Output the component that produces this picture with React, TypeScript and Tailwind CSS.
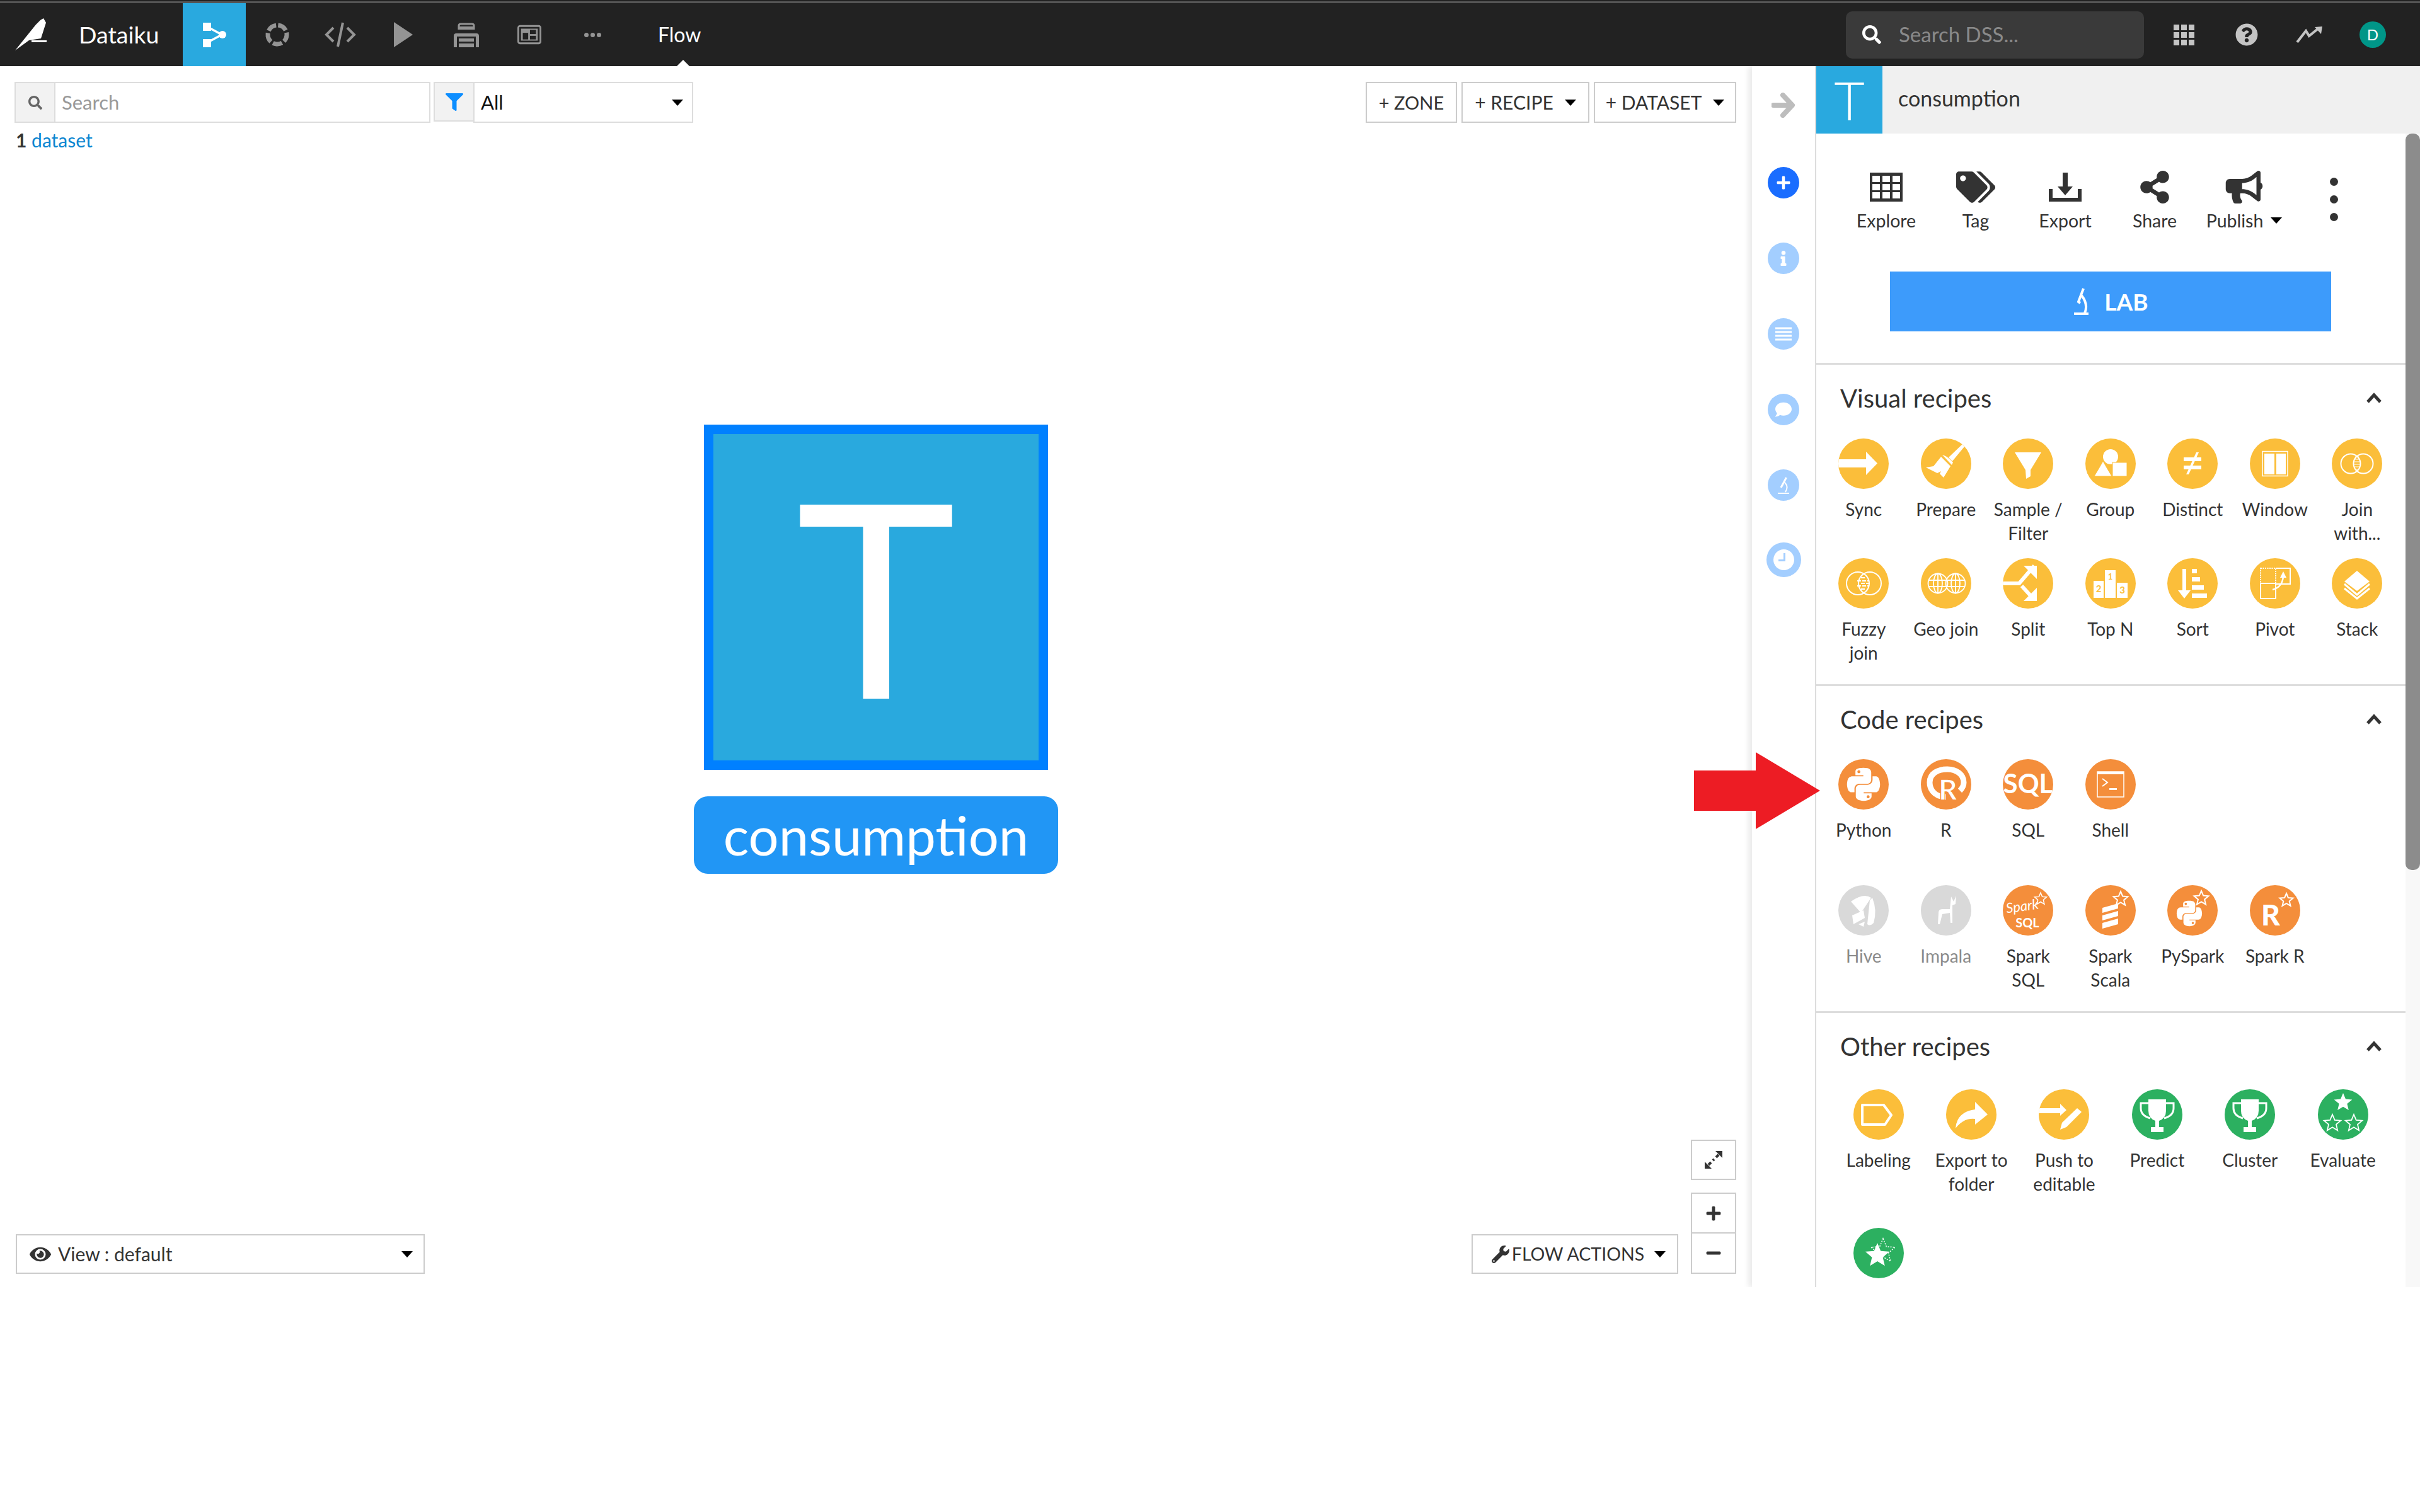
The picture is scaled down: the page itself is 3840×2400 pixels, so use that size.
import React from "react";
import { FaPython, FaTags, FaShareAlt, FaBullhorn, FaEye, FaWrench, FaPlus, FaMinus, FaInfo, FaComment, FaQuestionCircle, FaFilter, FaSearch } from "react-icons/fa";

const Caret = ({ className = "" }: { className?: string }) => (
  <span className={"inline-block w-0 h-0 border-x-[9px] border-x-transparent border-t-[10px] border-t-black " + className} />
);

const Star = ({ cx, cy, r, fill = "#fff", sw = 0, dash }: { cx: number; cy: number; r: number; fill?: string; sw?: number; dash?: string }) => {
  const pts: string[] = [];
  for (let i = 0; i < 10; i++) {
    const a = -Math.PI / 2 + (i * Math.PI) / 5;
    const rr = i % 2 === 0 ? r : r * 0.45;
    pts.push(`${(cx + rr * Math.cos(a)).toFixed(1)},${(cy + rr * Math.sin(a)).toFixed(1)}`);
  }
  return <polygon points={pts.join(" ")} fill={fill} stroke={sw ? "#fff" : "none"} strokeWidth={sw} strokeDasharray={dash} />;
};

const S = ({ children }: { children: React.ReactNode }) => (
  <svg viewBox="0 0 80 80" className="w-full h-full block">{children}</svg>
);

const Trophy = () => (
  <S>
    <path d="M26 16 H54 V34 Q54 46 43 50 V60 H50 V68 H30 V60 H37 V50 Q26 46 26 34 Z" fill="#fff" />
    <path d="M27 22 H14 V30 Q14 42 29 46 M53 22 H66 V30 Q66 42 51 46" stroke="#fff" strokeWidth="3" fill="none" />
  </S>
);

const recipeIcons: Record<string, React.ReactNode> = {
  sync: <S><polygon points="0,33 44,33 44,21 62,39.500 44,58 44,46 0,46" fill="#fff" /></S>,
  prepare: (
    <S>
      <path d="M44 30 L66 9 L69 13 L50 36 Z" fill="#fff" />
      <path d="M37 27 Q44 30 51 38 L49 42 L34 26 Z" fill="#fff" />
      <path d="M32 29 L47 44 L36 62 L30 56 L32 52 L26 55 L8 46 L20 44 Z" fill="#fff" />
    </S>
  ),
  sample: <S><polygon points="19,22 61,22 44,50 44,60 37,64 36,50" fill="#fff" /></S>,
  group: (
    <S>
      <circle cx="40" cy="29" r="12" fill="#fff" />
      <polygon points="28,36 42,60 14,60" fill="#fff" stroke="#fbbe3a" strokeWidth="1" />
      <rect x="43" y="38" width="23" height="22" fill="#fff" stroke="#fbbe3a" strokeWidth="1" />
    </S>
  ),
  distinct: (
    <S>
      <rect x="26" y="30" width="28" height="6" fill="#fff" />
      <rect x="26" y="43" width="28" height="6" fill="#fff" />
      <polygon points="46,22 50,22 34,57 30,57" fill="#fff" />
    </S>
  ),
  window: (
    <S>
      <rect x="20" y="20.500" width="40" height="39" fill="none" stroke="#fff" strokeWidth="1.500" />
      <rect x="23" y="24" width="16" height="33" fill="#fff" />
      <rect x="42" y="24" width="15" height="33" fill="#fff" />
    </S>
  ),
  join: (
    <S>
      <circle cx="30" cy="40" r="15.500" fill="none" stroke="#fff" strokeWidth="2" />
      <circle cx="50" cy="40" r="15.500" fill="none" stroke="#fff" strokeWidth="2" />
      <path d="M37 29 H43 M35 33 H45 M35 37 H45 M35 41 H45 M35 45 H45 M37 49 H43" stroke="#fff" strokeWidth="1" />
    </S>
  ),
  fuzzy: (
    <S>
      <circle cx="31" cy="40" r="18" fill="none" stroke="#fff" strokeWidth="2" />
      <circle cx="50" cy="40" r="18" fill="none" stroke="#fff" strokeWidth="2" />
      <path d="M36 31 H44 M30 36 H48 M36 40 H50 M30 44 H48 M36 49 H44" stroke="#fff" strokeWidth="2" strokeDasharray="6 2" />
    </S>
  ),
  geo: (
    <S>
      {[27, 55].map((x) => (
        <g key={x} fill="none" stroke="#fff" strokeWidth="1.800">
          <circle cx={x} cy="40" r="15.500" />
          <ellipse cx={x} cy="40" rx="7" ry="15.500" />
          <path d={`M${x} 24.500 V55.500 M${x - 15} 35 H${x + 15} M${x - 15} 45 H${x + 15}`} />
        </g>
      ))}
    </S>
  ),
  split: (
    <S>
      <path d="M0 40 H26 L50 12" fill="none" stroke="#fff" strokeWidth="6" />
      <path d="M30 44 L50 66" fill="none" stroke="#fff" strokeWidth="6" />
      <polygon points="33,12 54,12 54,33" fill="#fff" />
      <polygon points="54,47 54,68 33,68" fill="#fff" />
    </S>
  ),
  topn: (
    <S>
      <rect x="31" y="19" width="17" height="44" fill="#fff" />
      <rect x="13" y="36" width="16" height="27" fill="#fff" />
      <rect x="50" y="39" width="17" height="24" fill="#fff" />
      <text x="39.500" y="34" textAnchor="middle" fontSize="13" fontWeight="700" fill="#fbbe3a" fontFamily="Lato">1</text>
      <text x="21" y="54" textAnchor="middle" fontSize="15" fontWeight="700" fill="#fbbe3a" fontFamily="Lato">2</text>
      <text x="58.500" y="56" textAnchor="middle" fontSize="15" fontWeight="700" fill="#fbbe3a" fontFamily="Lato">3</text>
    </S>
  ),
  sort: (
    <S>
      <rect x="24" y="17" width="6" height="36" fill="#fff" />
      <polygon points="17,51 37,51 27,64" fill="#fff" />
      <rect x="39" y="17" width="8" height="7" fill="#fff" />
      <rect x="39" y="30" width="13" height="7" fill="#fff" />
      <rect x="39" y="43" width="19" height="7" fill="#fff" />
      <rect x="39" y="56" width="24" height="7" fill="#fff" />
    </S>
  ),
  pivot: (
    <S>
      <rect x="17" y="16" width="24" height="24" fill="none" stroke="#fff" strokeWidth="2" strokeDasharray="2 1.500" />
      <path d="M41 16 H64 V41 H41" fill="none" stroke="#fff" strokeWidth="2" />
      <rect x="17" y="40" width="24" height="24" fill="none" stroke="#fff" strokeWidth="2" />
      <path d="M36 50 Q52 46 53 28" fill="none" stroke="#fff" strokeWidth="2.500" />
      <polygon points="53,21 58,31 48,31" fill="#fff" />
    </S>
  ),
  stack: (
    <S>
      <polygon points="40,20 60,37 40,52 20,37" fill="#fff" />
      <path d="M20 41 L40 58 L60 41" fill="none" stroke="#fff" strokeWidth="3" />
      <path d="M20 48 L40 64 L60 48" fill="none" stroke="#fff" strokeWidth="3" />
    </S>
  ),
  python: <div className="w-full h-full flex items-center justify-center text-white"><FaPython className="w-[60px] h-[60px]" /></div>,
  r: (
    <S>
      <path d="M40 60 C18 60 14 44 14 37 C14 22 28 16 42 16 C56 16 68 24 68 37 C68 42 66 46 62 50" fill="none" stroke="#fff" strokeWidth="9" />
      <text x="43" y="65" textAnchor="middle" fontSize="46" fontWeight="900" fill="#fff" stroke="#f48e3b" strokeWidth="1.500" fontFamily="Lato">R</text>
    </S>
  ),
  sql: (
    <S>
      <text x="40" y="54" textAnchor="middle" fontSize="42" fontWeight="700" fill="#fff" fontFamily="Lato">SQL</text>
    </S>
  ),
  shell: (
    <S>
      <rect x="19" y="20" width="42" height="40" fill="none" stroke="#fff" strokeWidth="1.500" />
      <rect x="19" y="20" width="42" height="4" fill="#fff" />
      <path d="M27 31 L35 37 L27 43" fill="none" stroke="#fff" strokeWidth="2" />
      <rect x="38" y="46" width="12" height="3" fill="#fff" />
    </S>
  ),
  hive: (
    <S>
      <path d="M20 26 Q40 12 52 20 L36 44 Z" fill="#fff" />
      <path d="M54 20 Q62 40 56 60 Q50 66 46 62 L50 24 Z" fill="#fff" />
      <path d="M22 48 L40 40 L42 52 L24 62 Z" fill="#fff" />
      <path d="M32 62 L42 58 L40 66 Z" fill="#fff" />
    </S>
  ),
  impala: (
    <S>
      <path d="M48 18 L52 26 L56 17 L55 30 L50 32 V60 H47 L46 44 L34 46 L30 62 L27 62 L28 44 Q28 38 34 38 L46 38 L47 28 Z" fill="#fff" />
    </S>
  ),
  sparksql: (
    <S>
      <text x="32" y="41" textAnchor="middle" fontSize="22" fontStyle="italic" fill="#fff" fontFamily="Lato" transform="rotate(-8 32 41)">Spark</text>
      <text x="39" y="67" textAnchor="middle" fontSize="20" fontWeight="700" fill="#fff" fontFamily="Lato">SQL</text>
      <Star cx={60} cy={22} r={10} fill="none" sw={1.500} />
    </S>
  ),
  scala: (
    <S>
      <polygon points="27,36 52,29 52,37 27,44" fill="#fff" />
      <polygon points="27,48 52,41 52,49 27,56" fill="#fff" />
      <polygon points="27,60 52,53 52,62 27,69" fill="#fff" />
      <Star cx={56} cy={22} r={12} fill="none" sw={2} />
    </S>
  ),
  pyspark: (
    <div className="relative w-full h-full text-white">
      <FaPython className="absolute left-[12px] top-[22px] w-[46px] h-[46px]" />
      <div className="absolute inset-0"><S><Star cx={54} cy={21} r={12} fill="none" sw={2} /></S></div>
    </div>
  ),
  sparkr: (
    <S>
      <text x="33" y="64" textAnchor="middle" fontSize="46" fontWeight="900" fill="#fff" fontFamily="Lato">R</text>
      <Star cx={58} cy={24} r={11} fill="none" sw={2} />
    </S>
  ),
  labeling: (
    <S>
      <polygon points="14,25 48,25 60,41 50,56 14,56" fill="none" stroke="#fff" strokeWidth="4" strokeLinejoin="round" />
    </S>
  ),
  export: <S><path d="M46 20 L66 40 L46 56 V47 Q28 45 15 62 Q17 36 46 32 Z" fill="#fff" /></S>,
  push: (
    <S>
      <polygon points="0,30 34,30 34,23 44,33 34,42 34,38 0,38" fill="#fff" />
      <path d="M34 64 L37 53 L61 30 L68 36 L44 60 Z" fill="#fff" />
    </S>
  ),
  trophy: <Trophy />,
  evaluate: (
    <S>
      <Star cx={40} cy={21} r={15} />
      <Star cx={23} cy={54} r={14} fill="none" sw={1.800} />
      <Star cx={57} cy={54} r={14} fill="none" sw={1.800} />
    </S>
  ),
  last: (
    <S>
      <Star cx={47} cy={37} r={20} fill="none" sw={1.500} dash="2 2" />
      <Star cx={38} cy={44} r={20} />
    </S>
  ),
};

type R = { k: string; l: React.ReactNode; c?: string; off?: boolean };
const Y = "bg-[#fbbe3a]";
const O = "bg-[#f48e3b]";
const G = "bg-[#2cb060]";
const D = "bg-[#d9d9d9]";

const Recipe = ({ k, l, c = Y, off }: R) => (
  <div className="flex flex-col items-center min-w-0">
    <div className={"w-[80px] h-[80px] shrink-0 rounded-full overflow-hidden " + c}>{recipeIcons[k]}</div>
    <div className={"mt-[13px] text-center text-[28px] leading-[38px] whitespace-nowrap " + (off ? "text-[#8a8a8a]" : "text-[#333]")}>{l}</div>
  </div>
);

const Section = ({ title, grid, children, border = true, top }: { title: string; grid: string; children: React.ReactNode; border?: boolean; top: string }) => (
  <section className={(border ? "border-b-[3px] border-[#dddddd] " : "") + "pt-[30px]"}>
    <div className="flex items-center justify-between h-[46px] pl-[38px] pr-[37px]">
      <h3 className="text-[40px] text-[#333] font-normal">{title}</h3>
      <svg viewBox="0 0 26 18" className="w-[26px] h-[18px]"><path d="M3 15 L13 4 L23 15" fill="none" stroke="#333" strokeWidth="5" /></svg>
    </div>
    <div className={grid + " " + top}>{children}</div>
  </section>
);

const Tool = ({ children, label, caret }: { children: React.ReactNode; label: string; caret?: boolean }) => (
  <div className="w-[142px] flex flex-col items-center text-[#333]">
    <div className="h-[54px] flex items-center justify-center">{children}</div>
    <div className="mt-[10px] text-[28.500px] leading-[32px] flex items-center gap-[12px] whitespace-nowrap">{label}{caret && <Caret />}</div>
  </div>
);

const Side = ({ children, on }: { children: React.ReactNode; on?: boolean }) => (
  <div className={"w-[50px] h-[50px] rounded-full flex items-center justify-center text-white " + (on ? "bg-[#1a6dff]" : "bg-[#a3ceff]")}>{children}</div>
);

const BoxBtn = ({ children, className = "" }: { children: React.ReactNode; className?: string }) => (
  <div className={"h-[65px] border-2 border-[#cccccc] bg-white flex items-center justify-center text-[#333] text-[30px] " + className}>{children}</div>
);

export default function App() {
  return (
    <div className="relative w-[3840px] h-[2400px] bg-white overflow-hidden" style={{ fontFamily: "Lato, 'Noto Sans', sans-serif" }}>
      <div className="h-[2px] bg-[#222222]" />
      <div className="h-[3px] bg-[#555555]" />
      <header className="h-[100px] bg-[#222222] flex items-stretch text-white">
        <div className="w-[290px] flex items-center">
          <svg viewBox="0 0 50 52" className="ml-[24px] w-[50px] h-[52px]">
            <path d="M0 51 L33 10 L40 3 L45 0 L49 7 L41 32 L22 35 Z" fill="#fff" />
            <rect x="26" y="35" width="24" height="3" fill="#fff" />
          </svg>
          <span className="ml-[51px] text-[37.500px]">Dataiku</span>
        </div>
        <div className="w-[100px] bg-[#29a9df] flex items-center justify-center">
          <svg viewBox="0 0 40 42" className="w-[40px] h-[42px]">
            <path d="M8 8 L32 21 L8 34" fill="none" stroke="#fff" strokeWidth="3.500" />
            <rect x="2" y="2" width="13" height="13" fill="#fff" />
            <rect x="2" y="28" width="13" height="13" fill="#fff" />
            <circle cx="33" cy="21" r="6" fill="#fff" />
          </svg>
        </div>
        <div className="w-[100px] flex items-center justify-center">
          <svg viewBox="0 0 40 40" className="w-[40px] h-[40px]"><circle cx="20" cy="20" r="15" fill="none" stroke="#949494" strokeWidth="7" strokeDasharray="15 3.850" transform="rotate(-85 20 20)" /></svg>
        </div>
        <div className="w-[100px] flex items-center justify-center">
          <svg viewBox="0 0 50 40" className="w-[50px] h-[40px]"><path d="M14 9 L3 20 L14 31 M36 9 L47 20 L36 31 M29 1 L21 39" fill="none" stroke="#949494" strokeWidth="4" /></svg>
        </div>
        <div className="w-[100px] flex items-center justify-center">
          <svg viewBox="0 0 30 40" className="w-[30px] h-[40px]"><polygon points="0,0 30,20 0,40" fill="#949494" /></svg>
        </div>
        <div className="w-[100px] flex items-center justify-center">
          <svg viewBox="0 0 40 40" className="w-[40px] h-[40px]">
            <path d="M8 12 V6 Q8 3 11 3 H29 Q32 3 32 6 V12" fill="none" stroke="#949494" strokeWidth="3" />
            <rect x="8" y="7" width="24" height="5" fill="#949494" />
            <path d="M0 40 V22 Q0 18 4 18 H36 Q40 18 40 22 V40 H35 V23 H5 V40 Z" fill="#949494" />
            <rect x="8" y="26" width="24" height="5" fill="#949494" />
            <rect x="8" y="34" width="24" height="6" fill="#949494" />
          </svg>
        </div>
        <div className="w-[100px] flex items-center justify-center">
          <svg viewBox="0 0 40 32" className="w-[38px] h-[32px]">
            <rect x="1.500" y="1.500" width="37" height="29" rx="3" fill="none" stroke="#949494" strokeWidth="3" />
            <rect x="6" y="6" width="28" height="20" fill="#949494" />
            <rect x="9" y="13" width="9" height="11" fill="#222" />
            <rect x="21" y="8" width="10" height="7" fill="#222" />
            <rect x="21" y="18" width="10" height="6" fill="#222" />
          </svg>
        </div>
        <div className="w-[100px] flex items-center justify-center gap-[3px]">
          <span className="w-[7px] h-[7px] rounded-full bg-[#949494]" />
          <span className="w-[7px] h-[7px] rounded-full bg-[#949494]" />
          <span className="w-[7px] h-[7px] rounded-full bg-[#949494]" />
        </div>
        <div className="relative ml-[54px] flex items-center w-[80px]">
          <span className="text-[32px]">Flow</span>
          <span className="absolute left-[30px] bottom-0 w-0 h-0 border-x-[10px] border-x-transparent border-b-[10px] border-b-white" />
        </div>
        <div className="ml-auto self-center w-[473px] h-[75px] rounded-[10px] bg-[#3a3a3a] flex items-center">
          <FaSearch className="ml-[26px] w-[30px] h-[30px] text-white" />
          <span className="ml-[28px] text-[33px] text-[#8a8a8a]">Search DSS...</span>
        </div>
        <div className="ml-[13px] w-[100px] flex items-center justify-center">
          <div className="grid grid-cols-3 gap-[3px]">
            {Array.from({ length: 9 }).map((_, i) => <span key={i} className="w-[9px] h-[9px] bg-[#c4c4c4]" />)}
          </div>
        </div>
        <div className="w-[100px] flex items-center justify-center"><FaQuestionCircle className="w-[36px] h-[36px] text-[#c4c4c4]" /></div>
        <div className="w-[100px] flex items-center justify-center">
          <svg viewBox="0 0 44 28" className="w-[44px] h-[28px]">
            <path d="M2 26 L16 8 L21 16 L36 4" fill="none" stroke="#c4c4c4" strokeWidth="4" />
            <polygon points="30,2 42,1 40,13" fill="#c4c4c4" />
          </svg>
        </div>
        <div className="w-[100px] flex items-center justify-center">
          <div className="w-[42px] h-[42px] rounded-full bg-[#009688] flex items-center justify-center text-[24px] text-white">D</div>
        </div>
        <div className="w-[25px]" />
      </header>

      <main className="h-[1938px] flex overflow-hidden">
        <div className="relative w-[2780px] h-full flex flex-col px-[25px] pt-[25px] pb-[21px]">
          <div className="flex justify-between">
            <div className="flex -ml-[2px] text-[31px]">
              <div className="w-[63px] h-[65px] bg-[#f2f2f2] border-2 border-r-0 border-[#dddddd] flex items-center justify-center">
                <FaSearch className="w-[22px] h-[22px] text-[#666]" />
              </div>
              <div className="w-[597px] h-[65px] border-2 border-[#dddddd] flex items-center pl-[10px] text-[#999]">Search</div>
              <div className="ml-[5px] w-[63px] h-[63px] bg-[#f2f2f2] border-2 border-r-0 border-[#dddddd] flex items-center justify-center">
                <FaFilter className="w-[28px] h-[28px] text-[#0d8eff]" />
              </div>
              <div className="w-[349px] h-[65px] border-2 border-[#dddddd] flex items-center justify-between pl-[10px] pr-[14px] text-[#111]">All<Caret /></div>
            </div>
            <div className="flex gap-[7px]">
              <BoxBtn className="w-[145px]"><span className="text-[29px]">+ ZONE</span></BoxBtn>
              <BoxBtn className="w-[203px] gap-[18px]">+ RECIPE<Caret /></BoxBtn>
              <BoxBtn className="w-[226px] gap-[18px]">+ DATASET<Caret /></BoxBtn>
            </div>
          </div>
          <div className="mt-[11px] text-[30px] leading-[32px]"><span className="font-bold text-[#333]">1</span> <span className="text-[#0b86d1]">dataset</span></div>

          <div className="absolute left-[1101px] top-[569px] w-[578px] flex flex-col items-center">
            <div className="w-[546px] h-[548px] bg-[#29a9de] border-[15px] border-[#0080ff] flex items-center justify-center overflow-hidden pb-[10px]">
              <span className="text-white text-[430px] leading-none">T</span>
            </div>
            <div className="mt-[42px] w-[578px] h-[123px] rounded-[22px] bg-[#2196f5] flex items-center justify-center text-white text-[85px]">consumption</div>
          </div>

          <div className="mt-auto flex justify-between items-end">
            <div className="w-[649px] h-[63px] border-2 border-[#cccccc] flex items-center pl-[20px] pr-[17px] text-[30px] text-[#333]">
              <FaEye className="w-[34px] h-[34px]" />
              <span className="ml-[11px]">View : default</span>
              <Caret className="ml-auto" />
            </div>
            <div className="flex items-end gap-[20px]">
              <div className="w-[328px] h-[63px] border-2 border-[#cccccc] flex items-center justify-center gap-[4px] pl-[12px] text-[28.500px] text-[#333]">
                <FaWrench className="w-[28px] h-[28px]" />
                <span>FLOW ACTIONS</span>
                <Caret className="ml-[12px]" />
              </div>
              <div className="flex flex-col w-[72px] text-[#333]">
                <div className="h-[64px] border-2 border-[#cccccc] flex items-center justify-center mb-[20px]">
                  <svg viewBox="0 0 30 30" className="w-[30px] h-[30px]">
                    <path d="M7 23 L11 19 M14 16 L16 14 M19 11 L23 7" stroke="#333" strokeWidth="4" />
                    <polygon points="18,1 29,1 29,12" fill="#333" />
                    <polygon points="1,18 1,29 12,29" fill="#333" />
                  </svg>
                </div>
                <div className="h-[65px] border-2 border-[#cccccc] flex items-center justify-center"><FaPlus className="w-[26px] h-[26px]" /></div>
                <div className="h-[64px] border-2 border-t-0 border-[#cccccc] flex items-center justify-center"><FaMinus className="w-[26px] h-[26px]" /></div>
              </div>
            </div>
          </div>
        </div>

        <aside className="relative z-10 w-[100px] h-full shadow-[-6px_0_8px_rgba(0,0,0,0.08)] flex flex-col items-center pt-[42px] bg-white">
          <svg viewBox="0 0 38 40" className="w-[38px] h-[40px]">
            <path d="M3 20 H31 M18 4 L33 20 L18 36" fill="none" stroke="#bdbdbd" strokeWidth="8" strokeLinejoin="round" strokeLinecap="round" />
          </svg>
          <div className="mt-[78px] flex flex-col items-center gap-[70px]">
            <Side on><FaPlus className="w-[24px] h-[24px]" /></Side>
            <Side><FaInfo className="w-[24px] h-[24px]" /></Side>
            <Side>
              <svg viewBox="0 0 26 22" className="w-[26px] h-[22px]"><path d="M0 2 H26 M0 8 H26 M0 14 H26 M0 20 H26" stroke="#fff" strokeWidth="3" /></svg>
            </Side>
            <Side><FaComment className="w-[26px] h-[26px]" /></Side>
            <Side>
              <svg viewBox="0 0 18 27" className="w-[18px] h-[27px]"><path d="M13.500 1 L5 17" fill="none" stroke="#fff" strokeWidth="3" /><path d="M10 8 Q18 15 12 24 M0 26 H18" fill="none" stroke="#fff" strokeWidth="2" /></svg>
            </Side>
            <div className="w-[55px] h-[55px] -mt-[4px] rounded-full bg-[#a3ceff] flex items-center justify-center">
              <div className="relative w-[33px] h-[33px] rounded-full bg-white">
                <span className="absolute left-[16px] top-[6px] w-[3px] h-[13px] bg-[#a3ceff]" />
                <span className="absolute left-[8px] top-[16px] w-[10px] h-[3px] bg-[#a3ceff]" />
              </div>
            </div>
          </div>
        </aside>

        <div className="w-[960px] h-full border-l-2 border-[#dddddd] flex flex-col">
          <div className="h-[107px] shrink-0 bg-[#f0f0f0] flex items-center">
            <div className="w-[105px] h-full bg-[#29a9df] flex items-center justify-center text-white text-[84px] font-light leading-none">T</div>
            <span className="ml-[25px] text-[34px] text-[#333] -mt-[6px]">consumption</span>
          </div>
          <div className="flex-1 min-h-0 flex">
            <div className="flex-1 min-w-0 overflow-hidden">
              <section className="h-[367px] border-b-[3px] border-[#dddddd] pt-[58px]">
                <div className="flex pl-[40px]">
                  <Tool label="Explore">
                    <svg viewBox="0 0 52 46" className="w-[52px] h-[46px]">
                      <rect width="52" height="46" fill="#333" />
                      {[0, 1, 2].map((r) => [0, 1, 2].map((c) => <rect key={r + "-" + c} x={4 + c * 16} y={5 + r * 13} width="12" height="10" fill="#fff" />))}
                    </svg>
                  </Tool>
                  <Tool label="Tag"><FaTags className="w-[62px] h-[52px]" /></Tool>
                  <Tool label="Export">
                    <svg viewBox="0 0 52 46" className="w-[52px] h-[46px]">
                      <polygon points="22,0 30,0 30,22 38,22 26,36 14,22 22,22" fill="#333" />
                      <path d="M3 26 V43 H49 V26" fill="none" stroke="#333" strokeWidth="6" />
                    </svg>
                  </Tool>
                  <Tool label="Share"><FaShareAlt className="w-[50px] h-[52px]" /></Tool>
                  <Tool label="Publish" caret><FaBullhorn className="w-[60px] h-[52px]" /></Tool>
                  <div className="w-[142px] flex flex-col items-center gap-[15px] pt-[12px]">
                    <span className="w-[13px] h-[13px] rounded-full bg-[#333]" />
                    <span className="w-[13px] h-[13px] rounded-full bg-[#333]" />
                    <span className="w-[13px] h-[13px] rounded-full bg-[#333]" />
                  </div>
                </div>
                <div className="mt-[65px] ml-[117px] w-[700px] h-[95px] bg-[#3d9bfb] flex items-center justify-center gap-[24px] text-white text-[37px] font-bold">
                  <svg viewBox="0 0 24 44" className="w-[26px] h-[44px]"><path d="M16 1 L8 22 L11 24 M13 12 Q24 26 18 40 M1 41 H24" fill="none" stroke="#fff" strokeWidth="4" /></svg>
                  LAB
                </div>
              </section>

              <Section title="Visual recipes" grid="grid grid-cols-[repeat(7,130.5px)] auto-rows-[190px] pl-[10px] pb-[10px]" top="mt-[41px]">
                <Recipe k="sync" l="Sync" />
                <Recipe k="prepare" l="Prepare" />
                <Recipe k="sample" l={<>Sample /<br />Filter</>} />
                <Recipe k="group" l="Group" />
                <Recipe k="distinct" l="Distinct" />
                <Recipe k="window" l="Window" />
                <Recipe k="join" l={<>Join<br />with...</>} />
                <Recipe k="fuzzy" l={<>Fuzzy<br />join</>} />
                <Recipe k="geo" l="Geo join" />
                <Recipe k="split" l="Split" />
                <Recipe k="topn" l="Top N" />
                <Recipe k="sort" l="Sort" />
                <Recipe k="pivot" l="Pivot" />
                <Recipe k="stack" l="Stack" />
              </Section>

              <Section title="Code recipes" grid="grid grid-cols-[repeat(7,130.5px)] auto-rows-[200px] pl-[10px]" top="mt-[40px]">
                <Recipe k="python" l="Python" c={O} />
                <Recipe k="r" l="R" c={O} />
                <Recipe k="sql" l="SQL" c={O} />
                <Recipe k="shell" l="Shell" c={O} />
                <div /><div /><div />
                <Recipe k="hive" l="Hive" c={D} off />
                <Recipe k="impala" l="Impala" c={D} off />
                <Recipe k="sparksql" l={<>Spark<br />SQL</>} c={O} />
                <Recipe k="scala" l={<>Spark<br />Scala</>} c={O} />
                <Recipe k="pyspark" l="PySpark" c={O} />
                <Recipe k="sparkr" l="Spark R" c={O} />
              </Section>

              <Section title="Other recipes" border={false} grid="grid grid-cols-[repeat(6,147.4px)] auto-rows-[220px] pl-[25px]" top="mt-[45px]">
                <Recipe k="labeling" l="Labeling" />
                <Recipe k="export" l={<>Export to<br />folder</>} />
                <Recipe k="push" l={<>Push to<br />editable</>} />
                <Recipe k="trophy" l="Predict" c={G} />
                <Recipe k="trophy" l="Cluster" c={G} />
                <Recipe k="evaluate" l="Evaluate" c={G} />
                <Recipe k="last" l="" c={G} />
              </Section>
            </div>
            <div className="w-[23px] shrink-0 bg-[#f8f8f8]">
              <div className="h-[1169px] bg-[#8c8c8c] rounded-[10px]" />
            </div>
          </div>
        </div>
      </main>

      <svg viewBox="0 0 200 122" className="absolute z-20 left-[2688px] top-[1194px] w-[200px] h-[122px]">
        <polygon points="0,29 98,29 98,0 200,61 98,122 98,93 0,93" fill="#ed1c24" />
      </svg>
    </div>
  );
}
